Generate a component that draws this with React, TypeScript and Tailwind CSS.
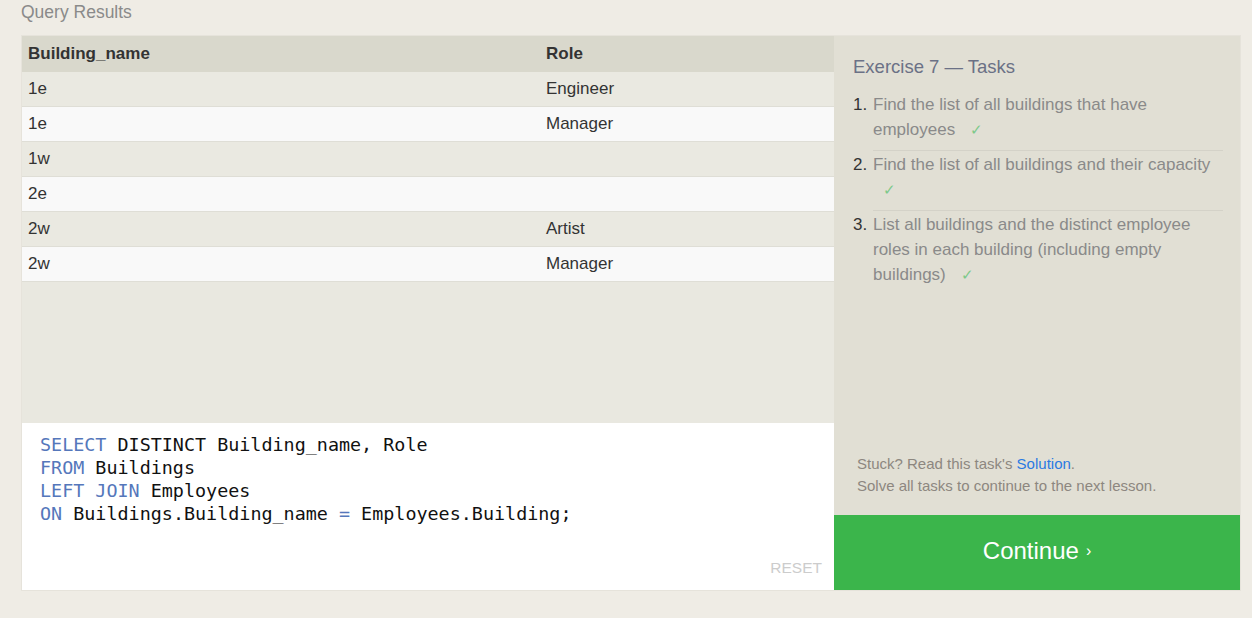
const ROWS: [string, string][] = [
  ['1e', 'Engineer'],
  ['1e', 'Manager'],
  ['1w', ''],
  ['2e', ''],
  ['2w', 'Artist'],
  ['2w', 'Manager'],
]

const TASKS = [
  'Find the list of all buildings that have employees',
  'Find the list of all buildings and their capacity',
  'List all buildings and the distinct employee roles in each building (including empty buildings)',
]

function Check() {
  return <span className="ml-[10px] text-[15px] text-[#7cc98a]">✓</span>
}

export default function App() {
  return (
    <div className="min-h-screen w-full bg-[#efece5] font-['Liberation_Sans',Arial,sans-serif]">
      <div className="px-[21px] pt-[1px]">
        <div className="h-[34px] text-[17.5px] leading-[22px] text-[#8a8a8a]">Query Results</div>
      </div>

      <div className="ml-[21px] flex h-[556px] w-[1220px] border border-[#e6e3db]">
        {/* left: results + editor */}
        <div className="flex w-[812px] flex-col">
          <div className="flex-1 bg-[#e9e8e0]">
            <div className="flex h-[36px] items-center bg-[#d9d8cc] text-[17px] font-bold text-[#333]">
              <div className="w-[524px] pl-[6px]">Building_name</div>
              <div>Role</div>
            </div>
            {ROWS.map(([b, r], i) => (
              <div
                key={i}
                className={
                  'flex h-[35px] items-center border-b border-[#dfded6] text-[17px] text-[#333] ' +
                  (i % 2 === 0 ? 'bg-[#eae9e1]' : 'bg-[#f9f9f9]')
                }
              >
                <div className="w-[524px] pl-[6px]">{b}</div>
                <div>{r}</div>
              </div>
            ))}
          </div>

          <div className="relative h-[167px] bg-white px-[18px] pt-[10px] font-['DejaVu_Sans_Mono',monospace] text-[18.4px] leading-[23px] text-[#111]">
            <div>
              <span className="text-[#5577bb]">SELECT</span> DISTINCT Building_name, Role
            </div>
            <div>
              <span className="text-[#5577bb]">FROM</span> Buildings
            </div>
            <div>
              <span className="text-[#5577bb]">LEFT JOIN</span> Employees
            </div>
            <div>
              <span className="text-[#5577bb]">ON</span> Buildings.Building_name <span className="text-[#5577bb]">=</span> Employees.Building;
            </div>
            <div className="absolute right-[12px] bottom-[13px] font-['Liberation_Sans',Arial,sans-serif] text-[15.5px] leading-[18px] text-[#cccccc]">
              RESET
            </div>
          </div>
        </div>

        {/* right: tasks */}
        <div className="flex w-[406px] flex-col bg-[#e1dfd4]">
          <div className="flex-1 pl-[19px] pr-[17px] pt-[19px]">
            <div className="text-[18.5px] leading-[24px] text-[#6b7186]">Exercise 7 — Tasks</div>
            <ol className="mt-[13px]">
              {TASKS.map((t, i) => (
                <li key={i} className="flex text-[17px] leading-[25px]">
                  <span className="w-[20px] text-[#333]">{i + 1}.</span>
                  <div
                    className={
                      'flex-1 pb-[8px] text-[#8a8a8a] ' +
                      (i < TASKS.length - 1 ? 'mb-[1px] border-b border-[#d4d2c8]' : '')
                    }
                  >
                    {t} <Check />
                  </div>
                </li>
              ))}
            </ol>
          </div>
          <div className="px-[23px] pb-[18px] text-[15px] leading-[22px] text-[#8d8780]">
            <div>
              Stuck? Read this task's <span className="text-[#2a7ae2]">Solution</span>.
            </div>
            <div>Solve all tasks to continue to the next lesson.</div>
          </div>
          <div className="flex h-[75px] items-center justify-center bg-[#3bb54b] pb-[4px] text-[24px] text-white">
            Continue <span className="ml-[7px] text-[16px]">›</span>
          </div>
        </div>
      </div>
    </div>
  )
}
